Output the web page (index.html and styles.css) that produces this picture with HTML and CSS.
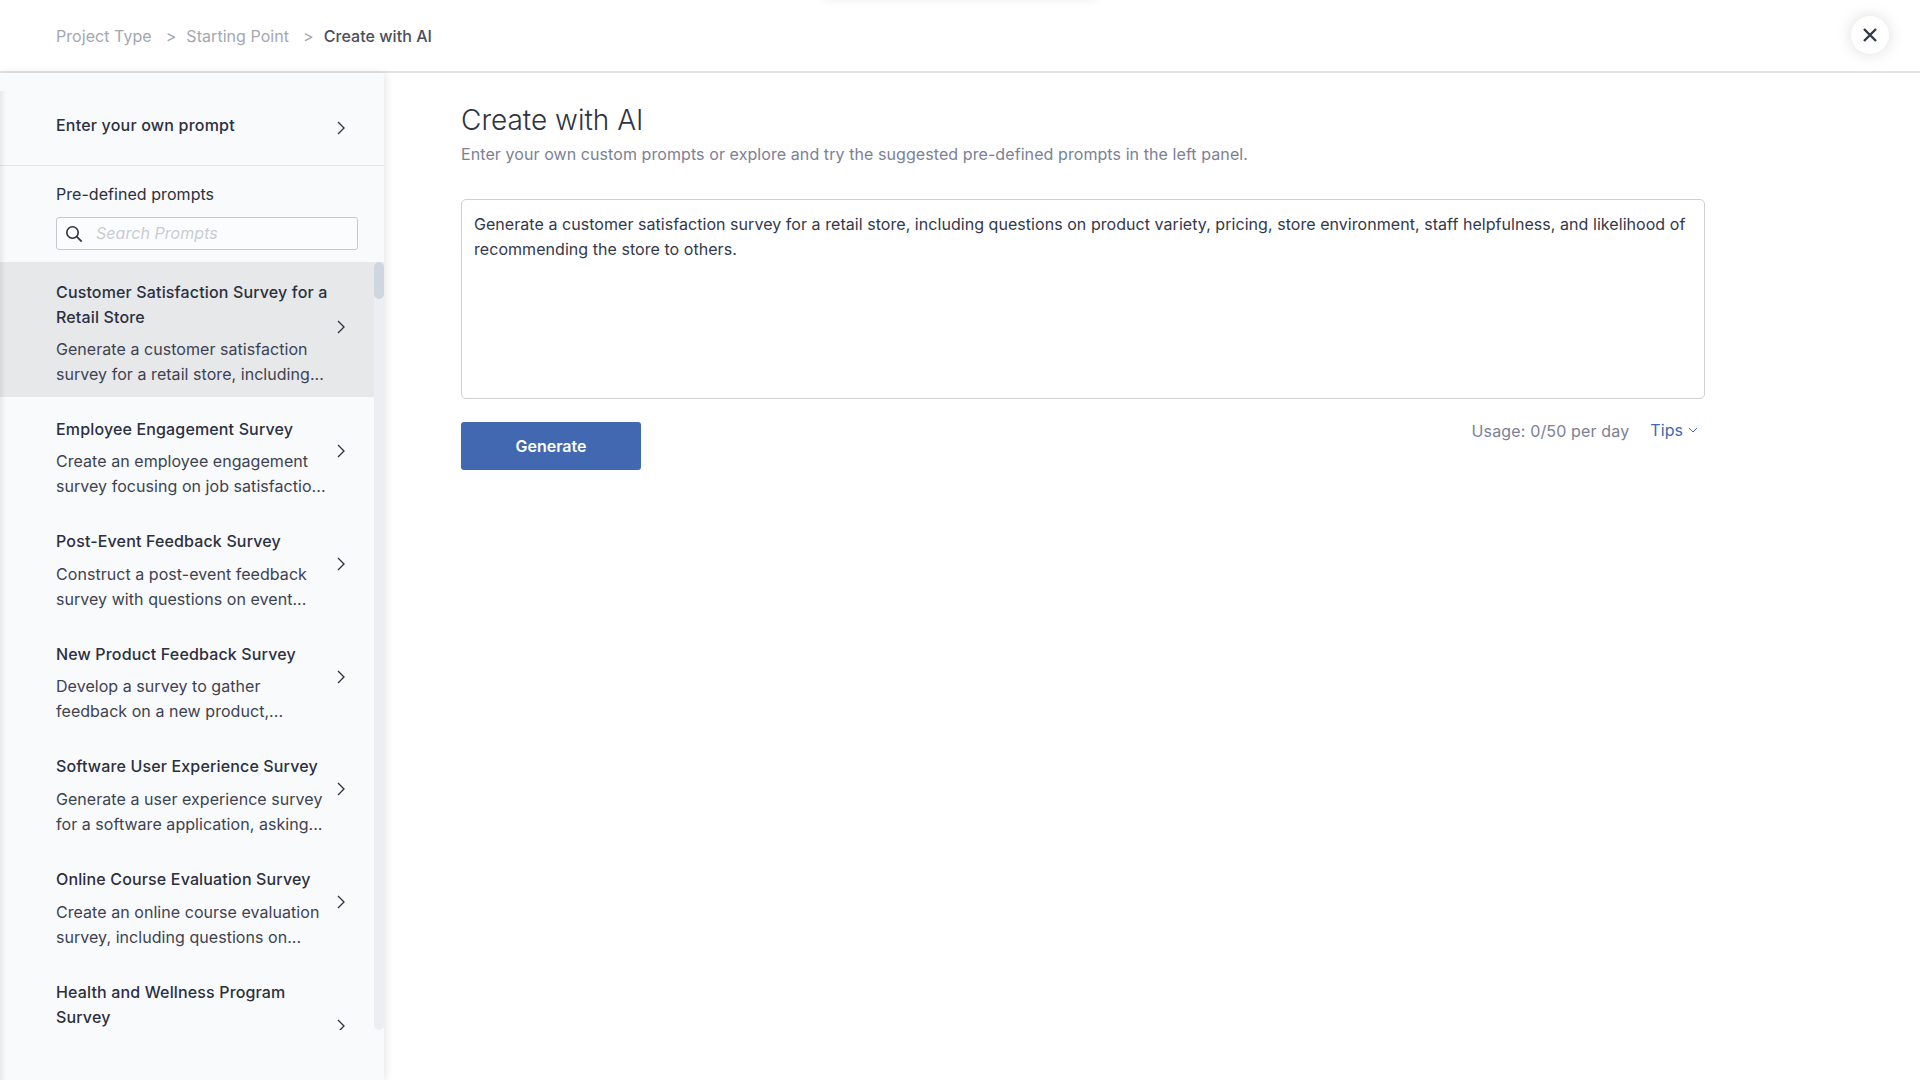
FILE: index.html
```html
<!DOCTYPE html>
<html lang="en">
<head>
<meta charset="utf-8">
<title>Create with AI</title>
<link rel="stylesheet" href="styles.css">
</head>
<body>
<div class="top-glow"></div>
<header class="topbar">
  <nav class="crumbs">
    <span class="crumb">Project Type</span>
    <span class="sep">&gt;</span>
    <span class="crumb">Starting Point</span>
    <span class="sep">&gt;</span>
    <span class="crumb current">Create with AI</span>
  </nav>
  <button class="close" aria-label="Close">
    <svg width="16" height="16" viewBox="0 0 16 16"><path d="M2 2l12 12M14 2L2 14" fill="none" stroke="#33384a" stroke-width="2.4"/></svg>
  </button>
</header>
<div class="body">
  <aside class="side">
    <div class="own">
      <span class="own-label">Enter your own prompt</span>
      <svg class="chev" width="8" height="14" viewBox="0 0 8 14"><path d="M1 1l6 6-6 6" fill="none" stroke="#2b3040" stroke-width="1.3"/></svg>
    </div>
    <div class="predef">
      <div class="predef-label">Pre-defined prompts</div>
      <div class="search">
        <svg width="18" height="18" viewBox="0 0 18 18"><circle cx="7.5" cy="7.5" r="5.7" fill="none" stroke="#2b3040" stroke-width="1.6"/><path d="M11.7 11.7l5 5" fill="none" stroke="#2b3040" stroke-width="1.7"/></svg>
        <span class="placeholder">Search Prompts</span>
      </div>
    </div>
    <div class="list-wrap">
      <ul class="list">
        <li class="item active"><div class="item-text"><div class="item-title">Customer Satisfaction Survey for a<br>Retail Store</div><div class="item-desc">Generate a customer satisfaction<br>survey for a retail store, including...</div></div><svg class="chev" width="8" height="14" viewBox="0 0 8 14"><path d="M1 1l6 6-6 6" fill="none" stroke="#2b3040" stroke-width="1.3"/></svg></li>
        <li class="item"><div class="item-text"><div class="item-title">Employee Engagement Survey</div><div class="item-desc">Create an employee engagement<br>survey focusing on job satisfactio...</div></div><svg class="chev" width="8" height="14" viewBox="0 0 8 14"><path d="M1 1l6 6-6 6" fill="none" stroke="#2b3040" stroke-width="1.3"/></svg></li>
        <li class="item"><div class="item-text"><div class="item-title">Post-Event Feedback Survey</div><div class="item-desc">Construct a post-event feedback<br>survey with questions on event...</div></div><svg class="chev" width="8" height="14" viewBox="0 0 8 14"><path d="M1 1l6 6-6 6" fill="none" stroke="#2b3040" stroke-width="1.3"/></svg></li>
        <li class="item"><div class="item-text"><div class="item-title">New Product Feedback Survey</div><div class="item-desc">Develop a survey to gather<br>feedback on a new product,...</div></div><svg class="chev" width="8" height="14" viewBox="0 0 8 14"><path d="M1 1l6 6-6 6" fill="none" stroke="#2b3040" stroke-width="1.3"/></svg></li>
        <li class="item"><div class="item-text"><div class="item-title">Software User Experience Survey</div><div class="item-desc">Generate a user experience survey<br>for a software application, asking...</div></div><svg class="chev" width="8" height="14" viewBox="0 0 8 14"><path d="M1 1l6 6-6 6" fill="none" stroke="#2b3040" stroke-width="1.3"/></svg></li>
        <li class="item"><div class="item-text"><div class="item-title">Online Course Evaluation Survey</div><div class="item-desc">Create an online course evaluation<br>survey, including questions on...</div></div><svg class="chev" width="8" height="14" viewBox="0 0 8 14"><path d="M1 1l6 6-6 6" fill="none" stroke="#2b3040" stroke-width="1.3"/></svg></li>
        <li class="item"><div class="item-text"><div class="item-title">Health and Wellness Program<br>Survey</div></div><svg class="chev" width="8" height="14" viewBox="0 0 8 14"><path d="M1 1l6 6-6 6" fill="none" stroke="#2b3040" stroke-width="1.3"/></svg></li>
      </ul>
      <div class="scroll-track"><div class="scroll-thumb"></div></div>
    </div>
    <div class="side-edge"></div>
  </aside>
  <main class="main">
    <h1 class="title">Create with AI</h1>
    <p class="sub">Enter your own custom prompts or explore and try the suggested pre-defined prompts in the left panel.</p>
    <div class="prompt">Generate a customer satisfaction survey for a retail store, including questions on product variety, pricing, store environment, staff helpfulness, and likelihood of recommending the store to others.</div>
    <div class="actions">
      <button class="generate">Generate</button>
      <div class="usage">
        <span class="usage-text">Usage: 0/50 per day</span>
        <span class="tips">Tips <svg width="10" height="6" viewBox="0 0 10 6"><path d="M1 1l4 4 4-4" fill="none" stroke="#4168b0" stroke-width="1"/></svg></span>
      </div>
    </div>
  </main>
</div>
</body>
</html>
```
FILE: styles.css
```css
* { box-sizing: border-box; }
html, body { margin: 0; height: 100%; }
body {
  font-family: "Inter", "Liberation Sans", sans-serif;
  font-size: 16px;
  line-height: 25px;
  letter-spacing: .05px;
  color: #2b3040;
  background: #fff;
  overflow: hidden;
  display: flex;
  flex-direction: column;
}
.top-glow {
  position: absolute;
  left: 822px; top: -6px;
  width: 276px; height: 6px;
  box-shadow: 0 0 8px rgba(0,0,0,.07);
}
.topbar {
  height: 73px;
  flex: none;
  border-bottom: 2px solid #e2e3e5;
  display: flex;
  align-items: center;
  justify-content: space-between;
  padding: 2px 31px 0 56px;
}
.crumbs { display: flex; align-items: center; }
.crumb { color: #a3a7b0; }
.crumb.current { color: #4a4e5a; font-weight: 500; }
.sep { color: #a3a7b0; margin: 0 10px 0 14px; }
.close {
  width: 38px; height: 38px;
  margin-top: -4px;
  border: 0;
  padding: 0;
  border-radius: 50%;
  background: #fff;
  box-shadow: 0 0 16px rgba(0,0,0,.14);
  display: flex; align-items: center; justify-content: center;
}
.body { flex: 1; display: flex; min-height: 0; }
.side {
  position: relative;
  width: 384px;
  flex: none;
  background: #f9fafc;
  box-shadow: 2px 0 8px rgba(0,0,0,.1);
  display: flex;
  flex-direction: column;
}
.side-edge {
  position: absolute;
  left: 0; top: 18px; bottom: 0;
  width: 6px;
  background: linear-gradient(to right, rgba(0,0,0,.07), rgba(0,0,0,0));
}
.own {
  height: 93px;
  flex: none;
  border-bottom: 1px solid #e2e4e8;
  display: flex;
  align-items: center;
  justify-content: space-between;
  padding: 17px 39px 0 56px;
}
.own-label { font-weight: 500; margin-top: -4px; letter-spacing: .2px; }
.chev { flex: none; }
.predef { height: 96px; flex: none; padding: 16px 26px 0 56px; }
.predef-label { margin-bottom: 10px; }
.search {
  height: 33px;
  border: 1px solid #c6c9d0;
  border-radius: 3px;
  background: #fbfcfd;
  display: flex;
  align-items: center;
  padding-left: 8px;
  gap: 13px;
}
.placeholder { color: #c9ccd3; font-style: italic; }
.list-wrap { height: 768px; flex: none; display: flex; overflow: hidden; }
.list { list-style: none; margin: 0; padding: 0; flex: 1; min-width: 0; }
.item {
  display: flex;
  align-items: center;
  justify-content: space-between;
  padding: 0 29px 0 56px;
}
.item.active { background: #e7e8ea; }
.item .chev { margin-top: -4px; }
.item.active .chev { margin-top: -6px; }
.item:last-child { height: 137.5px; align-items: flex-start; }
.item:last-child .chev { margin-top: 59px; }
.item-text { padding: 19.5px 0 10.65px; }
.active .item-text { padding: 17.5px 0 10px; }
.item-title { font-weight: 500; margin-bottom: 7.5px; white-space: nowrap; letter-spacing: .15px; }
.item-desc { color: #3d4250; white-space: nowrap; }
.scroll-track { width: 10px; flex: none; height: 768px; background: #eceef1; border-radius: 0 0 5px 5px; }
.scroll-thumb { height: 37px; background: #ced7df; border-radius: 5px; }
.main { flex: 1; padding: 29px 0 0 77px; min-width: 0; }
.title { margin: 0; font-weight: 300; font-size: 28px; line-height: 36px; letter-spacing: 0; color: #2f3442; }
.sub { margin: 4px 0 0; color: #7b8194; letter-spacing: .08px; }
.prompt {
  width: 1244px;
  height: 200px;
  margin-top: 32px;
  border: 1px solid #cfd0d3;
  border-radius: 5px;
  padding: 12px;
  color: #33384a;
}
.actions { width: 1244px; display: flex; justify-content: space-between; align-items: flex-start; margin-top: 23px; }
.generate {
  width: 180px; height: 48px;
  border: 0;
  border-radius: 3px;
  background: #4168b0;
  color: #fff;
  font: 600 16px "Inter", sans-serif;
}
.usage { display: flex; gap: 21px; padding-right: 7px; line-height: 22px; margin-top: -4px; }
.usage-text { color: #7b8194; padding-top: 2px; letter-spacing: .15px; }
.tips { color: #4168b0; display: flex; align-items: center; gap: 5px; }
```
